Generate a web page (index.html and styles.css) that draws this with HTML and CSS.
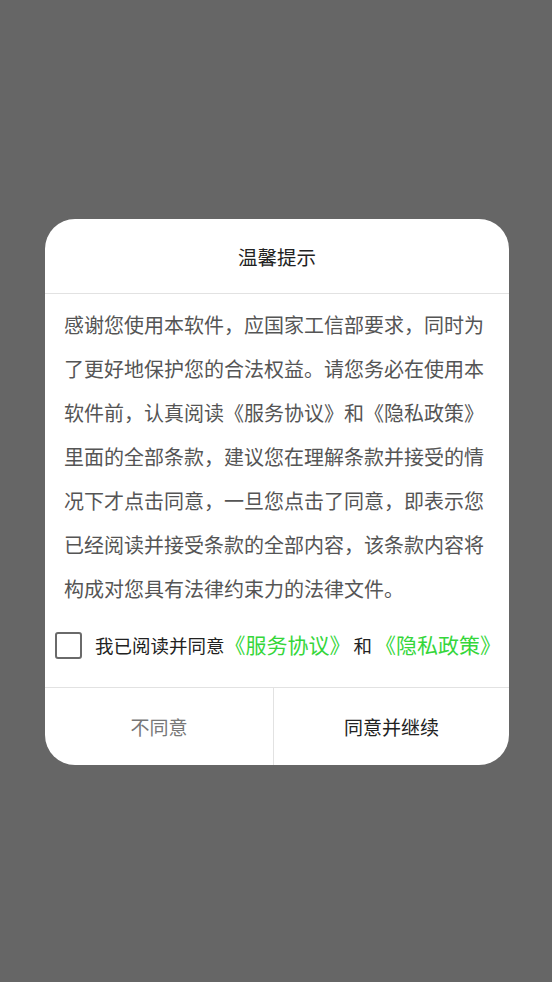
FILE: index.html
```html
<!DOCTYPE html>
<html lang="zh-CN">
<head>
<meta charset="utf-8">
<link rel="stylesheet" href="styles.css">
</head>
<body>
<div class="dialog">
  <div class="title">温馨提示</div>
  <p class="content">感谢您使用本软件，应国家工信部要求，同时为了更好地保护您的合法权益。请您务必在使用本软件前，认真阅读《服务协议》和《隐私政策》里面的全部条款，建议您在理解条款并接受的情况下才点击同意，一旦您点击了同意，即表示您已经阅读并接受条款的全部内容，该条款内容将构成对您具有法律约束力的法律文件。</p>
  <div class="agree">
    <span class="box"></span>
    <span class="agree-text">我已阅读并同意</span>
    <span class="link">《服务协议》</span>
    <span class="and">和</span>
    <span class="link">《隐私政策》</span>
  </div>
  <div class="actions">
    <div class="btn cancel">不同意</div>
    <div class="btn ok">同意并继续</div>
  </div>
</div>
</body>
</html>
```
FILE: styles.css
```css
html, body {
  margin: 0;
  padding: 0;
  background: #666666;
  height: 100%;
}
body {
  font-family: "Noto Sans CJK SC", "Noto Sans", sans-serif;
  overflow: hidden;
}
.dialog {
  margin: 219px 0 0 45px;
  width: 464px;
  background: #ffffff;
  border-radius: 30px;
  overflow: hidden;
}
.title {
  height: 74px;
  display: flex;
  align-items: center;
  justify-content: center;
  font-size: 19.5px;
  color: #222;
  border-bottom: 1px solid #e2e2e2;
}
.content {
  margin: 0;
  padding: 9px 14px 0 19px;
  font-size: 20px;
  line-height: 44px;
  color: #555;
  height: 308px;
  overflow: hidden;
}
.agree {
  display: flex;
  align-items: center;
  height: 40px;
  padding: 14px 0 22px 10px;
  border-bottom: 1px solid #e2e2e2;
  white-space: nowrap;
  line-height: 1.2;
}
.box {
  width: 23px;
  height: 23px;
  border: 2px solid #6a6a6a;
  border-radius: 3px;
  flex: none;
  margin-right: 13px;
}
.agree-text {
  font-size: 18.5px;
  color: #222;
}
.link {
  font-size: 21px;
  color: #35d63a;
}
.and {
  margin: 0 3px;
  font-size: 18.5px;
  color: #222;
}
.actions {
  display: flex;
  height: 77px;
}
.btn {
  display: flex;
  align-items: center;
  justify-content: center;
  font-size: 19px;
}
.cancel {
  flex: 0 0 228px;
  color: #777;
  border-right: 1px solid #e2e2e2;
}
.ok {
  flex: 1;
  color: #222;
}
```
